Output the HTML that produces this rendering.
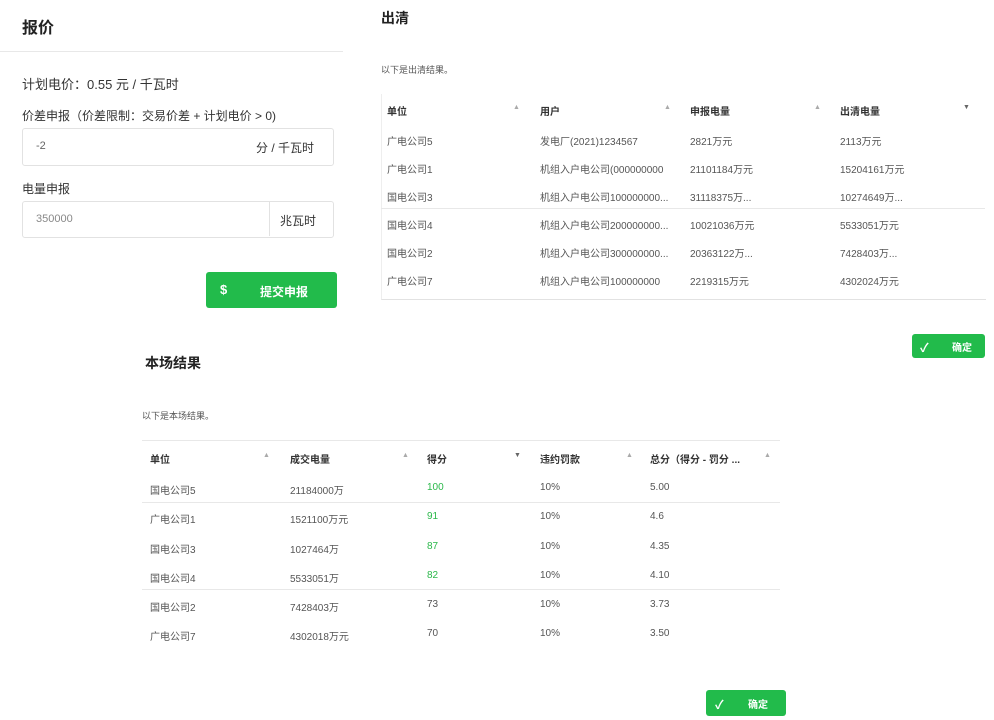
<!DOCTYPE html>
<html><head><meta charset="utf-8"><style>
body{margin:0;width:994px;height:720px;background:#fff;font-family:"Liberation Sans","Noto Sans CJK SC",sans-serif;color:#333;position:relative;overflow:hidden}
.a{position:absolute;white-space:nowrap}
.h{font-weight:bold;font-size:16px;color:#222}
.box{position:absolute;border:1px solid #e2e2e2;border-radius:3px;background:#fff}
.btn{position:absolute;background:#22bb4b;border-radius:3px;color:#fff;font-weight:bold;font-size:12px}
.th{font-size:10px;font-weight:bold;color:#333}
.td{font-size:10px;color:#555}
.ar{font-size:7px;color:#aaa}
.ln{position:absolute;height:1px;background:#e8e8e8}
.g{color:#2ab84a}
</style></head><body>
<div class="a h" style="left:22px;top:14px">报价</div>
<div class="ln" style="left:0;top:51px;width:343px"></div>
<div class="a" style="left:22px;top:74px;font-size:13px">计划电价：0.55 元 / 千瓦时</div>
<div class="a" style="left:22px;top:107px;font-size:12px">价差申报（价差限制：交易价差 + 计划电价 &gt; 0)</div>
<div class="box" style="left:22px;top:128px;width:310px;height:36px"></div>
<div class="a" style="left:36px;top:140px;font-size:11px;color:#666">-2</div>
<div class="a" style="left:256px;top:139px;font-size:12px">分 / 千瓦时</div>
<div class="a" style="left:22px;top:180px;font-size:12px">电量申报</div>
<div class="box" style="left:22px;top:201px;width:310px;height:35px"></div>
<div style="position:absolute;left:269px;top:202px;width:1px;height:34px;background:#e2e2e2"></div>
<div class="a" style="left:36px;top:213px;font-size:11px;color:#888">350000</div>
<div class="a" style="left:280px;top:212px;font-size:12px">兆瓦时</div>
<div class="btn" style="left:206px;top:272px;width:131px;height:36px"><span class="a" style="left:14px;top:10px;font-size:13px">$</span><span class="a" style="left:54px;top:11px">提交申报</span></div>

<div class="a h" style="left:381px;top:8px;font-size:14px">出清</div>
<div class="a td" style="left:381px;top:63px;font-size:9px">以下是出清结果。</div>
<div style="position:absolute;left:381px;top:94px;width:604px;height:205px;border-left:1px solid #eee;border-bottom:1px solid #e2e2e2"></div>
<div class="a th" style="left:387px;top:103px">单位</div><div class="a ar" style="left:513px;top:104px">▲</div>
<div class="a th" style="left:540px;top:103px">用户</div><div class="a ar" style="left:664px;top:104px">▲</div>
<div class="a th" style="left:690px;top:103px">申报电量</div><div class="a ar" style="left:814px;top:104px">▲</div>
<div class="a th" style="left:840px;top:103px">出清电量</div><div class="a ar" style="left:963px;top:104px;color:#666">▼</div>
<div class="ln" style="left:381px;top:208px;width:604px"></div>
<div class="a td" style="left:387px;top:133px">广电公司5</div><div class="a td" style="left:540px;top:133px">发电厂(2021)1234567</div><div class="a td" style="left:690px;top:133px">2821万元</div><div class="a td" style="left:840px;top:133px">2113万元</div>
<div class="a td" style="left:387px;top:161px">广电公司1</div><div class="a td" style="left:540px;top:161px">机组入户电公司(000000000</div><div class="a td" style="left:690px;top:161px">21101184万元</div><div class="a td" style="left:840px;top:161px">15204161万元</div>
<div class="a td" style="left:387px;top:189px">国电公司3</div><div class="a td" style="left:540px;top:189px">机组入户电公司100000000...</div><div class="a td" style="left:690px;top:189px">31118375万...</div><div class="a td" style="left:840px;top:189px">10274649万...</div>
<div class="a td" style="left:387px;top:217px">国电公司4</div><div class="a td" style="left:540px;top:217px">机组入户电公司200000000...</div><div class="a td" style="left:690px;top:217px">10021036万元</div><div class="a td" style="left:840px;top:217px">5533051万元</div>
<div class="a td" style="left:387px;top:245px">国电公司2</div><div class="a td" style="left:540px;top:245px">机组入户电公司300000000...</div><div class="a td" style="left:690px;top:245px">20363122万...</div><div class="a td" style="left:840px;top:245px">7428403万...</div>
<div class="a td" style="left:387px;top:273px">广电公司7</div><div class="a td" style="left:540px;top:273px">机组入户电公司100000000</div><div class="a td" style="left:690px;top:273px">2219315万元</div><div class="a td" style="left:840px;top:273px">4302024万元</div>
<div class="btn" style="left:912px;top:334px;width:73px;height:24px"><span class="a" style="left:8px;top:5px">✓</span><span class="a" style="left:40px;top:5px;font-size:10px">确定</span></div>

<div class="a h" style="left:145px;top:353px;font-size:14px">本场结果</div>
<div class="a td" style="left:142px;top:409px;font-size:9px">以下是本场结果。</div>
<div class="ln" style="left:142px;top:440px;width:638px"></div>
<div class="a th" style="left:150px;top:451px">单位</div><div class="a ar" style="left:263px;top:452px">▲</div>
<div class="a th" style="left:290px;top:451px">成交电量</div><div class="a ar" style="left:402px;top:452px">▲</div>
<div class="a th" style="left:427px;top:451px">得分</div><div class="a ar" style="left:514px;top:452px;color:#666">▼</div>
<div class="a th" style="left:540px;top:451px">违约罚款</div><div class="a ar" style="left:626px;top:452px">▲</div>
<div class="a th" style="left:650px;top:451px">总分（得分 - 罚分 ...</div><div class="a ar" style="left:764px;top:452px">▲</div>
<div class="ln" style="left:142px;top:502px;width:638px"></div>
<div class="ln" style="left:142px;top:589px;width:638px"></div>
<div class="a td" style="left:150px;top:482px">国电公司5</div><div class="a td" style="left:290px;top:482px">21184000万</div><div class="a td g" style="left:427px;top:482px">100</div><div class="a td" style="left:540px;top:482px">10%</div><div class="a td" style="left:650px;top:482px">5.00</div>
<div class="a td" style="left:150px;top:511px">广电公司1</div><div class="a td" style="left:290px;top:511px">1521100万元</div><div class="a td g" style="left:427px;top:511px">91</div><div class="a td" style="left:540px;top:511px">10%</div><div class="a td" style="left:650px;top:511px">4.6</div>
<div class="a td" style="left:150px;top:541px">国电公司3</div><div class="a td" style="left:290px;top:541px">1027464万</div><div class="a td g" style="left:427px;top:541px">87</div><div class="a td" style="left:540px;top:541px">10%</div><div class="a td" style="left:650px;top:541px">4.35</div>
<div class="a td" style="left:150px;top:570px">国电公司4</div><div class="a td" style="left:290px;top:570px">5533051万</div><div class="a td g" style="left:427px;top:570px">82</div><div class="a td" style="left:540px;top:570px">10%</div><div class="a td" style="left:650px;top:570px">4.10</div>
<div class="a td" style="left:150px;top:599px">国电公司2</div><div class="a td" style="left:290px;top:599px">7428403万</div><div class="a td" style="left:427px;top:599px">73</div><div class="a td" style="left:540px;top:599px">10%</div><div class="a td" style="left:650px;top:599px">3.73</div>
<div class="a td" style="left:150px;top:628px">广电公司7</div><div class="a td" style="left:290px;top:628px">4302018万元</div><div class="a td" style="left:427px;top:628px">70</div><div class="a td" style="left:540px;top:628px">10%</div><div class="a td" style="left:650px;top:628px">3.50</div>
<div class="btn" style="left:706px;top:690px;width:80px;height:26px"><span class="a" style="left:9px;top:6px">✓</span><span class="a" style="left:42px;top:6px;font-size:10px">确定</span></div>
</body></html>
